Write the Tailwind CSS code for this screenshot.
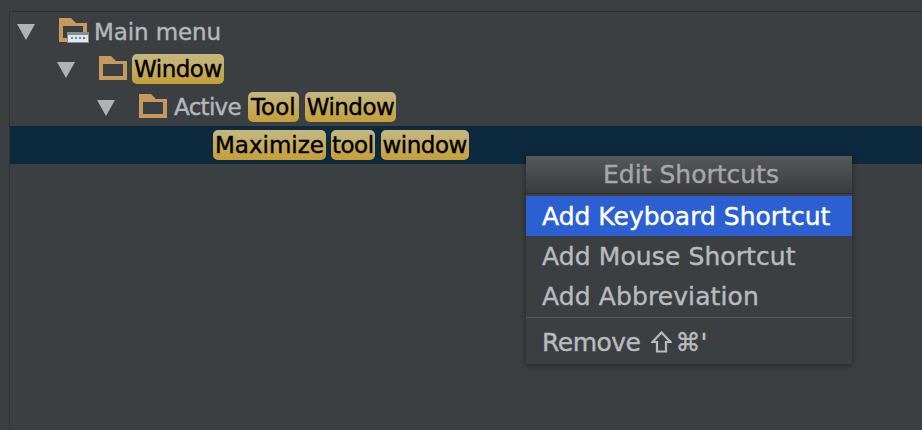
<!DOCTYPE html>
<html lang="en">
<head>
  <meta charset="UTF-8" />
  <title>Edit Shortcuts</title>
  <script src="https://cdn.jsdelivr.net/npm/@tailwindcss/browser@4"></script>
</head>
<body class="w-[922px] h-[430px] overflow-hidden bg-[#3c3f41] font-['DejaVu_Sans',sans-serif] [-webkit-text-stroke:0.4px]">
  <div class="relative h-[430px] pt-[11px] pl-[9px]">
    <!-- Tree panel -->
    <div class="h-[419px] border-t border-l border-[#2f3133] text-[23px] leading-[38px] text-[#b4b8bc]">
      <div class="flex items-center h-[38px] pl-[7px]">
        <svg class="mt-[2px] w-[18px] h-[16px]" viewBox="0 0 18 16"><path d="M0 0L18 0L9 16Z" fill="#b0b2b4"/></svg>
        <svg class="ml-[24px] w-[30px] h-[28px]" viewBox="0 0 30 28">
          <path fill-rule="evenodd" d="M0 1H12L17 6H28V25H0ZM4 9V21H24V9Z" fill="#c69a5f"/>
          <rect x="8" y="15" width="22" height="11" fill="#8a8d90"/>
          <rect x="9" y="18" width="20" height="7" fill="#dfe6ee"/>
          <rect x="12" y="20" width="2" height="2" fill="#5a8fc0"/>
          <rect x="16" y="20" width="2" height="2" fill="#5a9f70"/>
          <rect x="20" y="20" width="2" height="2" fill="#5a8fc0"/>
          <rect x="24" y="20" width="2" height="2" fill="#c05a5a"/>
        </svg>
        <span class="ml-[5px] mt-[1px] tracking-[-0.1px]">Main menu</span>
      </div>
      <div class="flex items-center h-[38px] pl-[47px]">
        <svg class="mt-[2px] w-[18px] h-[16px]" viewBox="0 0 18 16"><path d="M0 0L18 0L9 16Z" fill="#b0b2b4"/></svg>
        <svg class="ml-[24px] mb-[2px] w-[28px] h-[24px]" viewBox="0 0 28 24"><path fill-rule="evenodd" d="M0 0H12L17 5H28V24H0ZM4 8V20H24V8Z" fill="#c69a5f"/></svg>
        <span class="ml-[5px] px-[2px] rounded-[5px] h-[30px] leading-[30px] tracking-[-0.5px] text-black bg-gradient-to-b from-[#c4b880] to-[#c59f35]">Window</span>
      </div>
      <div class="flex items-center h-[38px] pl-[87px]">
        <svg class="mt-[2px] w-[18px] h-[16px]" viewBox="0 0 18 16"><path d="M0 0L18 0L9 16Z" fill="#b0b2b4"/></svg>
        <svg class="ml-[24px] mb-[2px] w-[28px] h-[24px]" viewBox="0 0 28 24"><path fill-rule="evenodd" d="M0 0H12L17 5H28V24H0ZM4 8V20H24V8Z" fill="#c69a5f"/></svg>
        <span class="ml-[7px] tracking-[-0.7px]">Active</span>
        <span class="ml-[7px] px-[3px] rounded-[5px] h-[30px] leading-[30px] text-black bg-gradient-to-b from-[#c4b880] to-[#c59f35]">Tool</span>
        <span class="ml-[6px] px-[2px] rounded-[5px] h-[30px] leading-[30px] tracking-[-0.5px] text-black bg-gradient-to-b from-[#c4b880] to-[#c59f35]">Window</span>
      </div>
      <div class="flex items-center h-[38px] pl-[203px] bg-[#0d293e]">
        <span class="px-[2px] rounded-[5px] h-[30px] leading-[30px] text-black bg-gradient-to-b from-[#c4b880] to-[#c59f35]">Maximize</span>
        <span class="ml-[5px] px-[1px] rounded-[5px] h-[30px] leading-[30px] tracking-[-0.5px] text-black bg-gradient-to-b from-[#c4b880] to-[#c59f35]">tool</span>
        <span class="ml-[6px] px-[2px] rounded-[5px] h-[30px] leading-[30px] tracking-[-0.5px] text-black bg-gradient-to-b from-[#c4b880] to-[#c59f35]">window</span>
      </div>
    </div>

    <!-- Popup menu -->
    <div class="absolute left-[526px] top-[156px] w-[326px] h-[208px] bg-[#3c3f41] text-[#b8bbbe] text-[25px] shadow-[0_1px_6px_rgba(0,0,0,0.45)]">
      <div class="h-[38px] leading-[38px] text-center text-[#a5a8aa] pl-[4px] bg-gradient-to-b from-[#55585a] to-[#3a3c3e] border-b border-[#2b2b2b]">Edit Shortcuts</div>
      <div class="mt-[2px] h-[40px] leading-[42px] pl-[16px] bg-[#2c5fd1] text-white">Add Keyboard Shortcut</div>
      <div class="h-[40px] leading-[42px] pl-[16px] tracking-[0.1px]">Add Mouse Shortcut</div>
      <div class="h-[40px] leading-[42px] pl-[16px] tracking-[0.1px]">Add Abbreviation</div>
      <div class="mt-[1px] border-t border-[#55585a]"></div>
      <div class="mt-[5px] h-[40px] leading-[42px] pl-[16px] flex items-center">
        <span class="tracking-[-0.5px]">Remove</span>
        <svg class="ml-[11px] mb-[2px] w-[21px] h-[22px]" viewBox="0 0 21 22"><path d="M10.5 1.5L19.5 11H15V20.5H6V11H1.5Z" fill="none" stroke="#b8bbbe" stroke-width="2.2" stroke-linejoin="miter"/></svg>
        <span class="ml-[3px]">⌘'</span>
      </div>
    </div>
  </div>
</body>
</html>
